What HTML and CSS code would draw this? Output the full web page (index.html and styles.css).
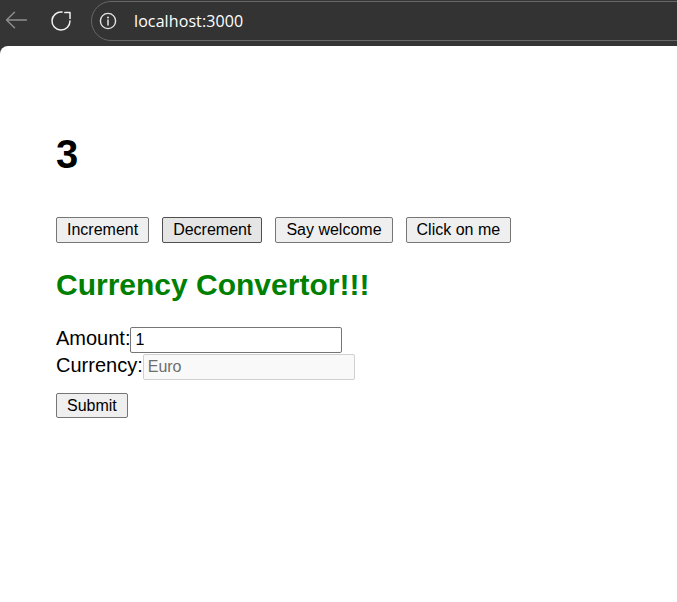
FILE: index.html
```html
<!DOCTYPE html>
<html lang="en">
<head>
<meta charset="utf-8">
<title>React App</title>
<link rel="stylesheet" href="styles.css">
</head>
<body>
<header class="chrome">
  <svg class="back" width="24" height="24" viewBox="0 0 24 24" aria-hidden="true">
    <path d="M2.5 12 H22.5 M10.5 4.3 L2.5 12 L10.5 19.7" fill="none" stroke="#8e8e8e" stroke-width="1.4" stroke-linecap="round" stroke-linejoin="round"/>
  </svg>
  <svg class="reload" width="24" height="24" viewBox="0 0 24 24" aria-hidden="true">
    <path d="M13 3.06 A9 9 0 1 0 21 12" fill="none" stroke="#f0f0f0" stroke-width="1.5" stroke-linecap="round"/>
    <path d="M15.8 3.4 H21 V9.6" fill="none" stroke="#f0f0f0" stroke-width="1.5" stroke-linecap="round" stroke-linejoin="round"/>
  </svg>
  <div class="omnibox">
    <svg class="info" width="20" height="20" viewBox="0 0 20 20" aria-hidden="true">
      <circle cx="10" cy="10" r="7.6" fill="none" stroke="#e4e4e4" stroke-width="1.4"/>
      <circle cx="10" cy="6.6" r="1" fill="#e4e4e4"/>
      <path d="M10 9 V14" stroke="#e4e4e4" stroke-width="1.5" stroke-linecap="round"/>
    </svg>
    <span class="url">localhost:3000</span>
  </div>
</header>
<main class="page">
  <h1 class="count">3</h1>
  <div class="actions">
    <button class="btn" type="button">Increment</button>
    <button class="btn btn-hover" type="button">Decrement</button>
    <button class="btn" type="button">Say welcome</button>
    <button class="btn" type="button">Click on me</button>
  </div>
  <h2 class="title">Currency Convertor!!!</h2>
  <form class="converter">
    <div class="row"><label class="label" for="amount">Amount:</label><input class="field" id="amount" type="text" value="1"></div>
    <div class="row"><label class="label" for="currency">Currency:</label><input class="field" id="currency" type="text" value="Euro" disabled></div>
    <button class="btn submit" type="button">Submit</button>
  </form>
</main>
</body>
</html>
```

FILE: styles.css
```css
html, body {
  margin: 0;
  padding: 0;
}

body {
  background: #353535;
  font-family: "Liberation Sans", Arial, sans-serif;
  color: #000;
  overflow: hidden;
}

.chrome {
  height: 46px;
  box-sizing: border-box;
  padding: 1px 0 0 4px;
  display: flex;
  align-items: flex-start;
  background: #353535;
  overflow: hidden;
}

.back {
  flex: none;
  margin-top: 7px;
}

.reload {
  flex: none;
  margin-left: 21px;
  margin-top: 8px;
}

.omnibox {
  flex: none;
  width: 700px;
  height: 40px;
  box-sizing: border-box;
  margin-left: 18px;
  border: 1px solid #676767;
  border-radius: 20px;
  display: flex;
  align-items: center;
  padding-left: 6px;
  background: #333333;
}

.info {
  flex: none;
}

.url {
  margin-left: 16px;
  font-family: "Open Sans", "Noto Sans", sans-serif;
  font-size: 16px;
  color: #ffffff;
  letter-spacing: 0.1px;
}

.page {
  background: #ffffff;
  border-top-left-radius: 8px;
  min-height: 556px;
  box-sizing: border-box;
  padding: 85px 56px 0;
}

.count {
  margin: 0;
  font-size: 40px;
  line-height: 46px;
  font-weight: 700;
}

.actions {
  margin-top: 40px;
  display: flex;
  gap: 13px;
}

.btn {
  appearance: none;
  height: 26px;
  box-sizing: border-box;
  padding: 0 10px;
  border: 1px solid #767676;
  border-radius: 2px;
  background: #efefef;
  font-family: "Liberation Sans", Arial, sans-serif;
  font-size: 16px;
  line-height: 18px;
  color: #000;
}

.btn-hover {
  background: #e5e5e5;
  border-color: #4f4f4f;
}

.title {
  margin: 25px 0 0;
  font-size: 30px;
  font-weight: 700;
  line-height: normal;
  color: #008000;
}

.converter {
  margin-top: 25px;
}

.row {
  display: flex;
  align-items: baseline;
  margin-bottom: 1px;
}

.label {
  font-size: 20px;
  line-height: normal;
}

.field {
  width: 212px;
  height: 26px;
  box-sizing: border-box;
  margin: 0;
  padding: 0 4px;
  border: 1px solid #767676;
  border-radius: 2px;
  background: #ffffff;
  font-family: "Liberation Sans", Arial, sans-serif;
  font-size: 16px;
  color: #000;
}

.field:disabled {
  background: #f9f9f9;
  border-color: #d0d0d0;
  color: #6d6d6d;
}

.submit {
  margin-top: 12px;
  height: 25px;
}
```
